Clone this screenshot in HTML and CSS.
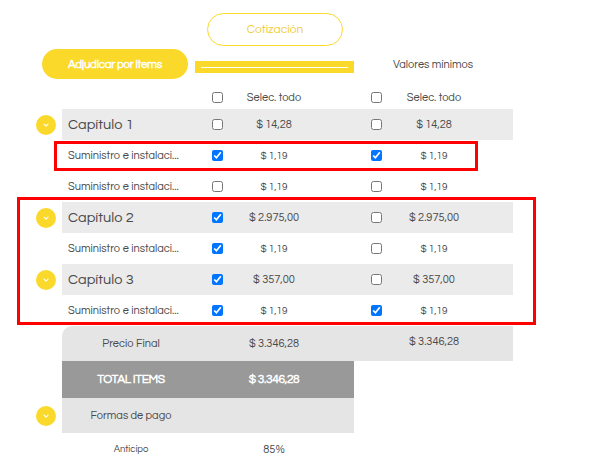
FILE: index.html
```html
<!DOCTYPE html>
<html lang="es">
<head>
<meta charset="UTF-8">
<meta name="viewport" content="width=device-width, initial-scale=1.0">
<title>Cotización</title>
<link rel="stylesheet" href="styles.css">
</head>
<body>
<div class="page">
    <div class="quote-row">
        <button class="btn-quote">Cotización</button>
    </div>
    <div class="action-row">
        <button class="btn-award">Adjudicar por items</button>
        <div class="quote-bar"><span></span></div>
        <div class="min-label">Valores mínimos</div>
    </div>

    <div class="table">
        <div class="row head">
            <div class="toggle"></div>
            <div class="cells">
                <span></span>
                <span class="cb"><input type="checkbox"></span>
                <span class="val">Selec. todo</span>
                <span></span>
                <span class="cb"><input type="checkbox"></span>
                <span class="val">Selec. todo</span>
                <span></span>
            </div>
        </div>

        <div class="row chapter">
            <div class="toggle"><span class="chevron"><svg viewBox="0 0 10 10" width="8" height="8"><polyline points="2.5,4 5,6.5 7.5,4" fill="none" stroke="#fff" stroke-width="1.4" stroke-linecap="round" stroke-linejoin="round"/></svg></span></div>
            <div class="cells">
                <span class="name">Capítulo 1</span>
                <span class="cb"><input type="checkbox"></span>
                <span class="val">$ 14,28</span>
                <span></span>
                <span class="cb"><input type="checkbox"></span>
                <span class="val">$ 14,28</span>
                <span></span>
            </div>
        </div>
        <div class="row item">
            <div class="toggle"></div>
            <div class="cells">
                <span class="name">Suministro e instalaci...</span>
                <span class="cb"><input type="checkbox" checked></span>
                <span class="val">$ 1,19</span>
                <span></span>
                <span class="cb"><input type="checkbox" checked></span>
                <span class="val">$ 1,19</span>
                <span></span>
            </div>
        </div>
        <div class="row item">
            <div class="toggle"></div>
            <div class="cells">
                <span class="name">Suministro e instalaci...</span>
                <span class="cb"><input type="checkbox"></span>
                <span class="val">$ 1,19</span>
                <span></span>
                <span class="cb"><input type="checkbox"></span>
                <span class="val">$ 1,19</span>
                <span></span>
            </div>
        </div>

        <div class="row chapter">
            <div class="toggle"><span class="chevron"><svg viewBox="0 0 10 10" width="8" height="8"><polyline points="2.5,4 5,6.5 7.5,4" fill="none" stroke="#fff" stroke-width="1.4" stroke-linecap="round" stroke-linejoin="round"/></svg></span></div>
            <div class="cells">
                <span class="name">Capítulo 2</span>
                <span class="cb"><input type="checkbox" checked></span>
                <span class="val">$ 2.975,00</span>
                <span></span>
                <span class="cb"><input type="checkbox"></span>
                <span class="val">$ 2.975,00</span>
                <span></span>
            </div>
        </div>
        <div class="row item">
            <div class="toggle"></div>
            <div class="cells">
                <span class="name">Suministro e instalaci...</span>
                <span class="cb"><input type="checkbox" checked></span>
                <span class="val">$ 1,19</span>
                <span></span>
                <span class="cb"><input type="checkbox"></span>
                <span class="val">$ 1,19</span>
                <span></span>
            </div>
        </div>

        <div class="row chapter">
            <div class="toggle"><span class="chevron"><svg viewBox="0 0 10 10" width="8" height="8"><polyline points="2.5,4 5,6.5 7.5,4" fill="none" stroke="#fff" stroke-width="1.4" stroke-linecap="round" stroke-linejoin="round"/></svg></span></div>
            <div class="cells">
                <span class="name">Capítulo 3</span>
                <span class="cb"><input type="checkbox" checked></span>
                <span class="val">$ 357,00</span>
                <span></span>
                <span class="cb"><input type="checkbox"></span>
                <span class="val">$ 357,00</span>
                <span></span>
            </div>
        </div>
        <div class="row item">
            <div class="toggle"></div>
            <div class="cells">
                <span class="name">Suministro e instalaci...</span>
                <span class="cb"><input type="checkbox" checked></span>
                <span class="val">$ 1,19</span>
                <span></span>
                <span class="cb"><input type="checkbox" checked></span>
                <span class="val">$ 1,19</span>
                <span></span>
            </div>
        </div>

        <div class="row final">
            <div class="toggle"></div>
            <div class="cells">
                <span class="label">Precio Final</span>
                <span></span>
                <span class="val">$ 3.346,28</span>
                <span></span>
                <span></span>
                <span class="val raised">$ 3.346,28</span>
                <span></span>
            </div>
        </div>
        <div class="row total">
            <div class="toggle"></div>
            <div class="cells short">
                <span class="label">TOTAL ITEMS</span>
                <span></span>
                <span class="val">$ 3.346,28</span>
                <span></span>
            </div>
        </div>
        <div class="row payment">
            <div class="toggle"><span class="chevron"><svg viewBox="0 0 10 10" width="8" height="8"><polyline points="2.5,4 5,6.5 7.5,4" fill="none" stroke="#fff" stroke-width="1.4" stroke-linecap="round" stroke-linejoin="round"/></svg></span></div>
            <div class="cells short">
                <span class="label">Formas de pago</span>
                <span></span>
                <span></span>
                <span></span>
            </div>
        </div>
        <div class="row advance">
            <div class="toggle"></div>
            <div class="cells short">
                <span class="label">Anticipo</span>
                <span></span>
                <span class="val">85%</span>
                <span></span>
            </div>
        </div>
    </div>

    <!-- highlight boxes drawn over the table -->
    <div class="mark mark-one"></div>
    <div class="mark mark-two"></div>
</div>
</body>
</html>
```

FILE: styles.css
```css
body {
    margin: 0;
    padding: 0;
    background-color: #fff;
    font-family: "Questrial", "Inter", "Liberation Sans", sans-serif;
    color: #555;
}

.page {
    position: relative;
    width: 602px;
    height: 474px;
    overflow: hidden;
}

button {
    font-family: inherit;
    cursor: pointer;
}

.quote-row {
    padding: 13px 0 0 207px;
}

.btn-quote {
    width: 136px;
    height: 33px;
    border: 1px solid #fbd92a;
    border-radius: 17px;
    background-color: #fff;
    color: #f2cc38;
    font-size: 12px;
    font-weight: 500;
}

.action-row {
    display: flex;
    align-items: flex-start;
    margin-top: 3px;
    padding-left: 42px;
}

.btn-award {
    width: 146px;
    height: 30px;
    border: none;
    border-radius: 15px;
    background-color: #fbd92a;
    color: #fff;
    font-size: 11.5px;
    font-weight: bold;
    letter-spacing: -0.3px;
}

.quote-bar {
    width: 159px;
    height: 12px;
    margin: 12px 0 0 7px;
    background-color: #fbd92a;
    display: flex;
    align-items: center;
    justify-content: center;
}

.quote-bar span {
    width: 147px;
    height: 1px;
    background-color: #fff;
}

.min-label {
    width: 82px;
    margin: 10px 0 0 38px;
    text-align: center;
    font-size: 11px;
    color: #4a4a4a;
    white-space: nowrap;
}

.table {
    margin: 6px 0 0 36px;
}

.row {
    display: flex;
}

.toggle {
    width: 26px;
    display: flex;
    align-items: center;
}

.chevron {
    width: 20px;
    height: 20px;
    border-radius: 50%;
    background-color: #fbd92a;
    display: flex;
    align-items: center;
    justify-content: center;
}

.cells {
    display: grid;
    grid-template-columns: 138px 34px 80px 40px 44px 72px 43px;
    align-items: center;
}

.cells.short {
    grid-template-columns: 138px 34px 80px 40px;
}

.cb {
    display: flex;
    justify-content: center;
}

.cb input {
    width: 11px;
    height: 11px;
    margin: 0;
}

.val {
    text-align: center;
    font-size: 11px;
    color: #4a4a4a;
    white-space: nowrap;
}

.name {
    padding-left: 6px;
    white-space: nowrap;
    overflow: hidden;
    font-size: 11px;
    color: #4a4a4a;
}

.head .cells {
    height: 24px;
}

.chapter .cells {
    height: 31px;
    background-color: #ebebeb;
}

.chapter .name {
    font-size: 14.5px;
}

.chapter .val {
    font-size: 11px;
}

.item .cells {
    height: 31px;
}

.item .val {
    font-size: 10px;
}

.label {
    text-align: center;
    font-size: 11px;
    color: #4a4a4a;
}

.final .cells {
    height: 35px;
    background-color: #e5e5e5;
    border-top-left-radius: 10px;
}

.final .raised {
    margin-top: -5px;
}

.total .cells {
    height: 37px;
    background-color: #999;
}

.total .label,
.total .val {
    color: #fff;
    font-size: 12px;
    font-weight: bold;
    letter-spacing: -0.4px;
}

.payment .cells {
    height: 35px;
    background-color: #e5e5e5;
}

.payment .label {
    font-size: 11px;
}

.advance .cells {
    height: 32px;
}

.advance .label {
    font-size: 9.5px;
}

.advance .val {
    font-size: 11px;
}

.mark {
    position: absolute;
    border: 3px solid #f00;
    pointer-events: none;
}

.mark-one {
    left: 54px;
    top: 141px;
    width: 418px;
    height: 24px;
}

.mark-two {
    left: 17px;
    top: 197px;
    width: 513px;
    height: 122px;
}
```
